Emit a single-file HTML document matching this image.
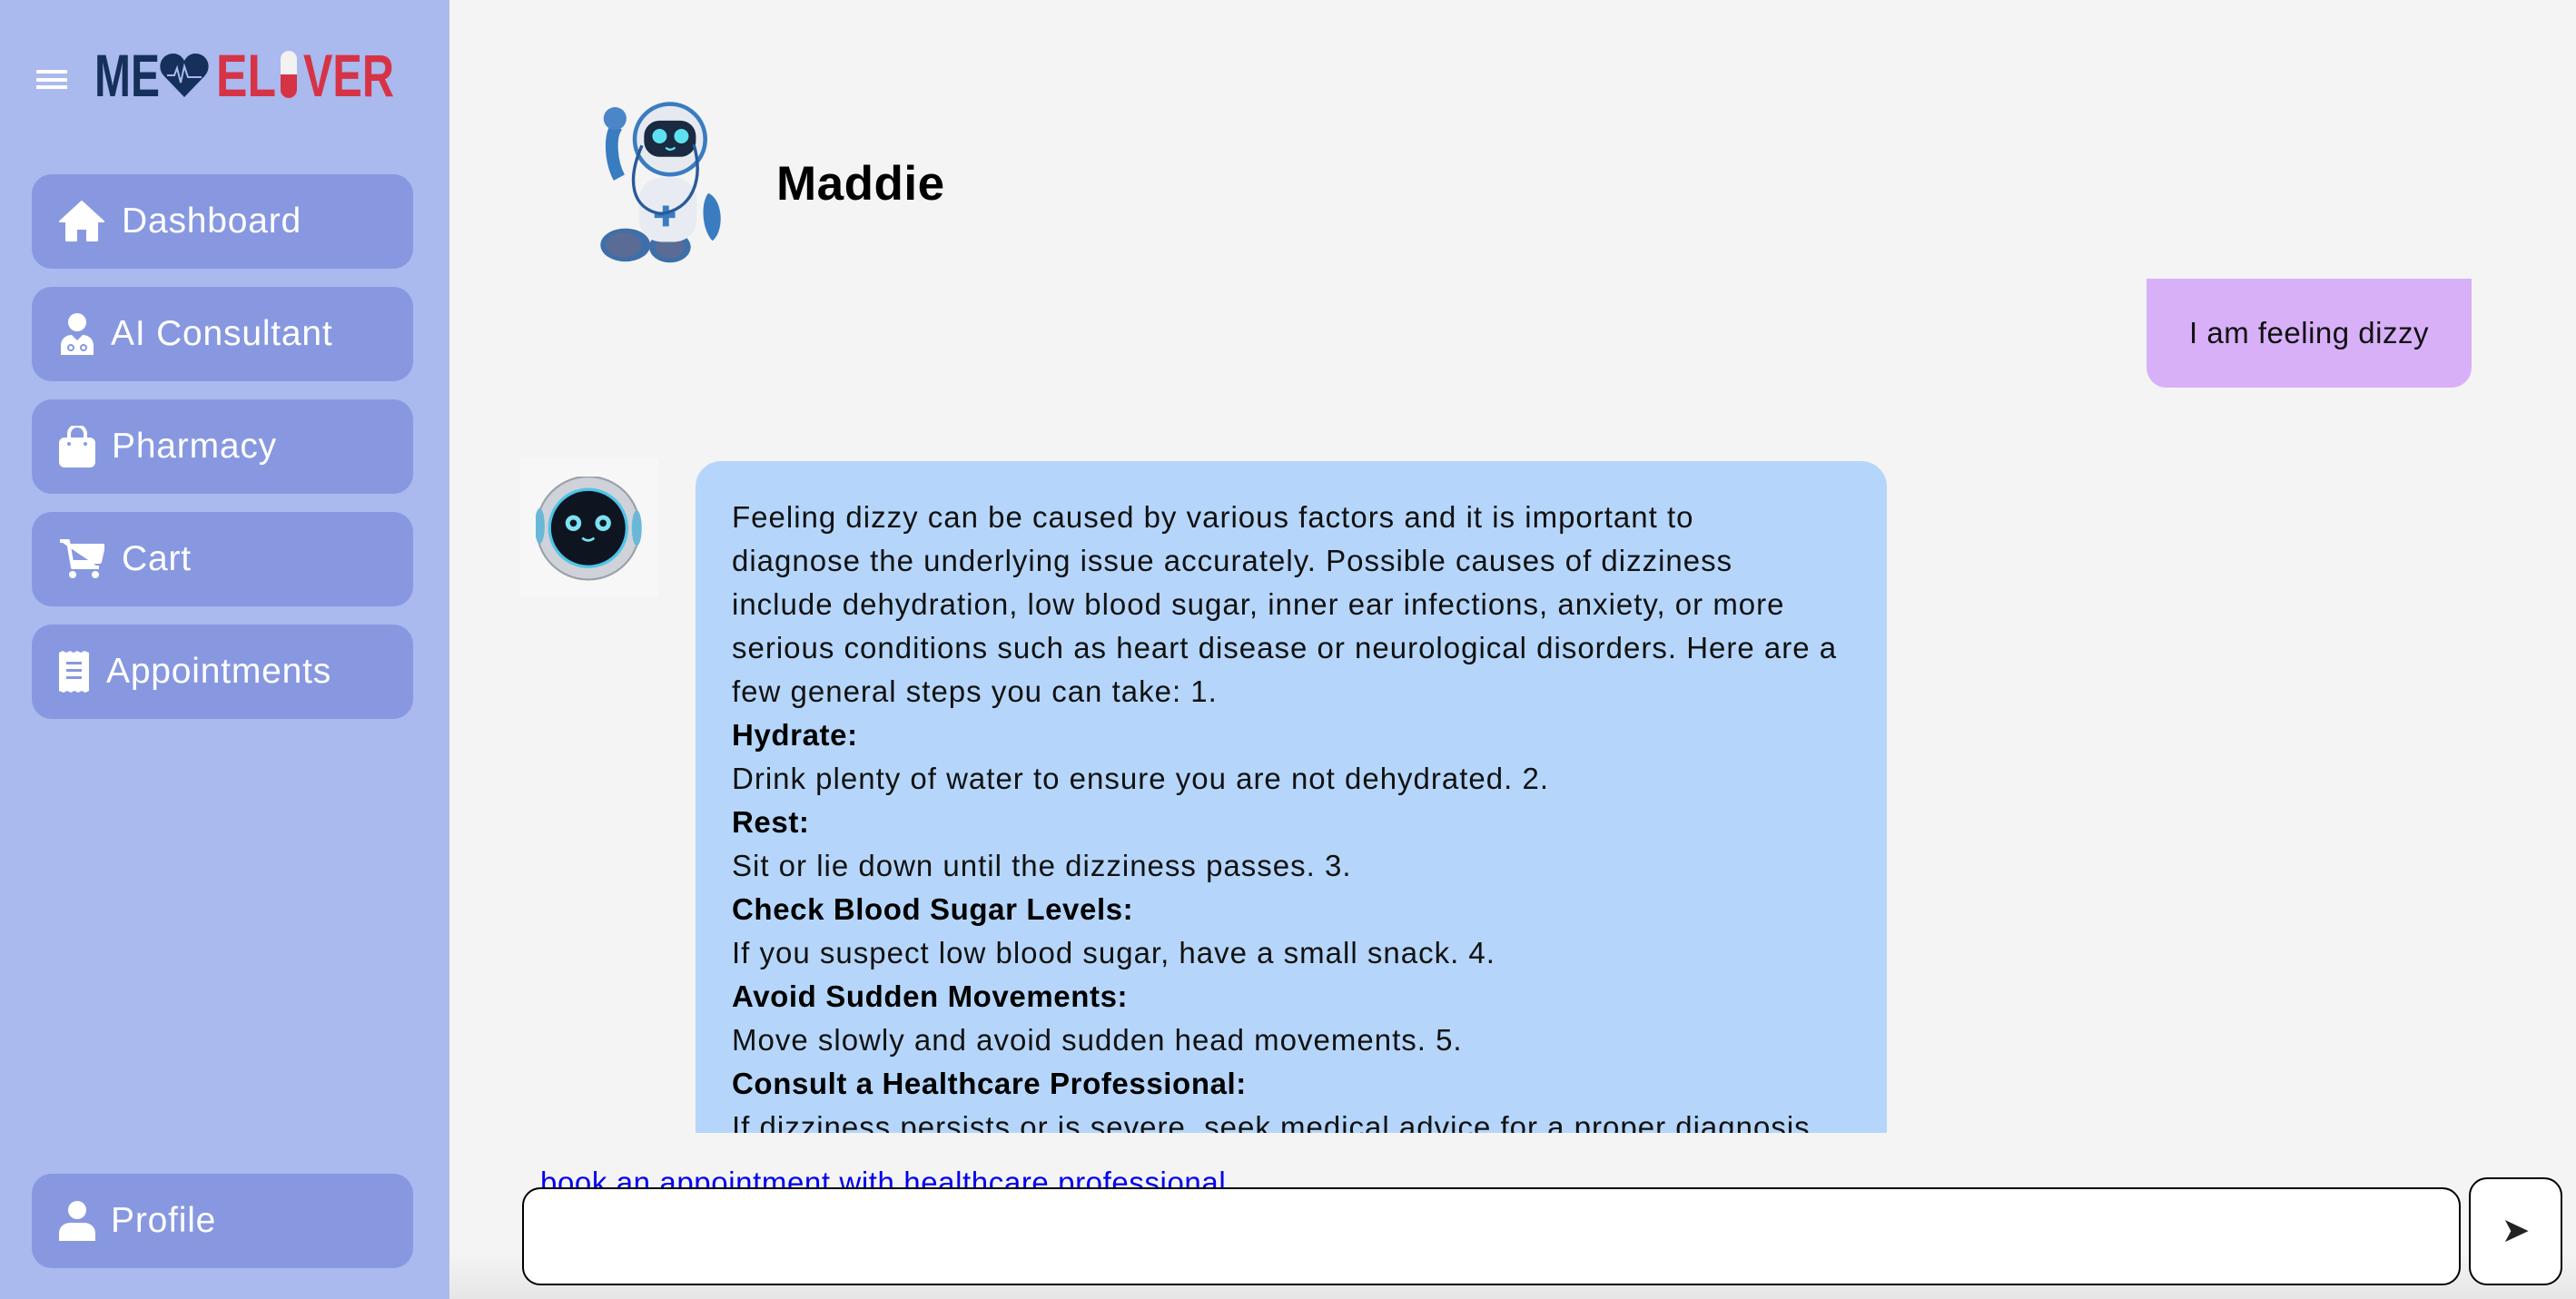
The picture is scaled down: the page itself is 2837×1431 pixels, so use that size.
<!DOCTYPE html>
<html><head><meta charset="utf-8"><style>
*{margin:0;padding:0;box-sizing:border-box}
body{width:2837px;height:1431px;overflow:hidden;background:#f4f4f4;font-family:"Liberation Sans",sans-serif;position:relative}
.side{position:absolute;left:0;top:0;width:495px;height:1431px;background:#aab9ee;z-index:5}
.btn{position:absolute;left:35px;width:420px;height:104px;background:#8898e0;border-radius:22px;color:#fff;font-size:39px;letter-spacing:0.8px}
.btn svg{position:absolute;top:50%;transform:translateY(-50%)}
.btn span{position:absolute;top:50%;transform:translateY(-50%)}
.bubble{position:absolute;left:766px;top:508px;width:1312px;height:740px;background:#b5d6fa;border-radius:28px 28px 0 0;overflow:hidden;padding:38px 20px 0 40px;font-size:33px;letter-spacing:1px;line-height:48px;color:#111;white-space:nowrap}
.bubble b{color:#000;letter-spacing:0.6px}
</style></head><body>
<div class="side">
  <div style="position:absolute;left:40px;top:77px;width:34px;height:21px;border-top:4px solid #fff;border-bottom:4px solid #fff"></div>
  <div style="position:absolute;left:40px;top:86px;width:34px;height:4px;background:#fff"></div>
  <svg style="position:absolute;left:104px;top:55px" width="332" height="55" viewBox="0 0 332 55">
    <text x="0" y="51" font-family="Liberation Sans" font-weight="bold" font-size="66" fill="#15305a" textLength="72" lengthAdjust="spacingAndGlyphs">ME</text>
    <path d="M99 52 L76 28 C68 18 74 4 87 4 C93 4 97 8 99 12 C101 8 105 4 111 4 C124 4 130 18 122 28 Z" fill="#15305a"/>
    <path d="M80 28 H88 L91 20 L95 36 L99 18 L103 30 H118" stroke="#aab9ee" stroke-width="2" fill="none"/>
    <text x="134" y="51" font-family="Liberation Sans" font-weight="bold" font-size="66" fill="#d63347" textLength="66" lengthAdjust="spacingAndGlyphs">EL</text>
    <rect x="205" y="1" width="18" height="52" rx="9" fill="#f2f2f2"/>
    <path d="M205 27 H223 V44 A9 9 0 0 1 205 44 Z" fill="#d63347"/>
    <text x="230" y="51" font-family="Liberation Sans" font-weight="bold" font-size="66" fill="#d63347" textLength="100" lengthAdjust="spacingAndGlyphs">VER</text>
  </svg>
  <div class="btn" style="top:192px"><svg style="left:30px" width="50" height="46" viewBox="0 0 50 46"><path d="M25 1 L49 23 H42 V44 H31 V31 H19 V44 H8 V23 H1 Z" fill="#fff" stroke="#fff" stroke-linejoin="round" stroke-width="2"/></svg><span style="left:99px">Dashboard</span></div>
  <div class="btn" style="top:316px"><svg style="left:30px" width="40" height="46" viewBox="0 0 40 46"><circle cx="20" cy="10" r="10" fill="#fff"/><path d="M2 46 V36 C2 28 8 24 14 24 L20 30 L26 24 C32 24 38 28 38 36 V46 Z" fill="#fff"/><circle cx="13" cy="38" r="3" fill="none" stroke="#8898e0" stroke-width="2"/><circle cx="27" cy="38" r="3" fill="none" stroke="#8898e0" stroke-width="2"/></svg><span style="left:87px">AI Consultant</span></div>
  <div class="btn" style="top:440px"><svg style="left:30px" width="40" height="46" viewBox="0 0 40 46"><path d="M11 14 V9 A9 9 0 0 1 29 9 V14" stroke="#fff" stroke-width="4" fill="none"/><rect x="0" y="13" width="40" height="33" rx="6" fill="#fff"/><circle cx="11" cy="20" r="2" fill="#8898e0"/><circle cx="29" cy="20" r="2" fill="#8898e0"/></svg><span style="left:88px">Pharmacy</span></div>
  <div class="btn" style="top:564px"><svg style="left:30px" width="50" height="46" viewBox="0 0 50 46"><path d="M1 3 H10 L15 32 H44 M11 8 H49 L45 26 H14" stroke="#fff" stroke-width="4" fill="#fff" stroke-linejoin="round"/><circle cx="15" cy="40" r="4" fill="#fff"/><circle cx="40" cy="40" r="4" fill="#fff"/></svg><span style="left:99px">Cart</span></div>
  <div class="btn" style="top:688px"><svg style="left:30px" width="34" height="46" viewBox="0 0 34 46"><path d="M0 2 L4 0 L8 2 L12 0 L16 2 L20 0 L24 2 L28 0 L33 2 V44 L29 46 L25 44 L21 46 L17 44 L13 46 L9 44 L5 46 L0 44 Z" fill="#fff"/><rect x="8" y="12" width="17" height="3" fill="#8898e0"/><rect x="8" y="20" width="17" height="3" fill="#8898e0"/><rect x="8" y="28" width="17" height="3" fill="#8898e0"/></svg><span style="left:82px">Appointments</span></div>
  <div class="btn" style="top:1293px"><svg style="left:30px" width="40" height="44" viewBox="0 0 40 44"><circle cx="20" cy="10" r="10" fill="#fff"/><path d="M0 44 V36 C0 28 6 24 13 24 H27 C34 24 40 28 40 36 V44 Z" fill="#fff"/></svg><span style="left:87px">Profile</span></div>
</div>

<svg style="position:absolute;left:650px;top:110px" width="170" height="185" viewBox="0 0 145 162">
  <ellipse cx="32" cy="140" rx="24" ry="16" fill="#3e6fa8"/><ellipse cx="30" cy="140" rx="17" ry="12" fill="#5a6c96"/>
  <ellipse cx="75" cy="142" rx="20" ry="15" fill="#3e6fa8"/><ellipse cx="75" cy="142" rx="14" ry="11" fill="#5a6c96"/>
  <rect x="45" y="75" width="56" height="62" rx="22" fill="#e8ecf2"/>
  <path d="M60 108 h8 v-6 h6 v6 h6 v6 h-6 v8 h-6 v-8 h-8z" fill="#3a7cc0"/>
  <path d="M26 75 C18 60 16 35 24 25" stroke="#3a7cc0" stroke-width="12" fill="none"/>
  <circle cx="22" cy="18" r="11" fill="#4a86c8"/>
  <path d="M112 90 C126 96 128 126 116 136 C106 126 104 100 112 90Z" fill="#3a7cc0"/>
  <circle cx="75" cy="38" r="34" fill="#e6eaf0"/><circle cx="75" cy="38" r="34" fill="none" stroke="#3a7cc0" stroke-width="4"/>
  <rect x="50" y="20" width="50" height="35" rx="15" fill="#1a2a40"/>
  <circle cx="65" cy="35" r="7" fill="#5ee0f0"/><circle cx="86" cy="35" r="7" fill="#5ee0f0"/>
  <path d="M71 46 Q75 50 80 46" stroke="#5ee0f0" stroke-width="2" fill="none"/>
  <path d="M48 44 C33 78 38 105 66 110 C96 106 108 78 98 43" stroke="#2a5a9a" stroke-width="3" fill="none"/>
</svg>
<div style="position:absolute;left:855px;top:172px;font-size:53px;font-weight:bold;color:#000;letter-spacing:0.5px">Maddie</div>

<div style="position:absolute;left:2364px;top:307px;width:358px;height:120px;background:#d8b0f8;border-radius:0 0 22px 22px;font-size:33px;letter-spacing:0.5px;line-height:120px;text-align:center;color:#111">I am feeling dizzy</div>

<div style="position:absolute;left:573px;top:505px;width:152px;height:152px;background:#f7f7f7"></div>
<svg style="position:absolute;left:590px;top:525px" width="120" height="120" viewBox="0 0 110 110">
  <circle cx="53" cy="52" r="52" fill="#cfd2d8"/><circle cx="53" cy="52" r="52" fill="none" stroke="#9aa0aa" stroke-width="2"/>
  <ellipse cx="4" cy="50" rx="5" ry="18" fill="#6ab8d8"/><ellipse cx="102" cy="52" rx="5" ry="18" fill="#6ab8d8"/>
  <circle cx="53" cy="52" r="39" fill="#0e1520" stroke="#4fc4e8" stroke-width="3"/>
  <circle cx="38" cy="47" r="8" fill="#7ee0f0"/><circle cx="68" cy="47" r="8" fill="#7ee0f0"/>
  <circle cx="38" cy="47" r="3.5" fill="#0e1520"/><circle cx="68" cy="47" r="3.5" fill="#0e1520"/>
  <path d="M47 62 Q53 67 59 62" stroke="#7ee0f0" stroke-width="2.5" fill="none"/>
</svg>

<div class="bubble">Feeling dizzy can be caused by various factors and it is important to<br>diagnose the underlying issue accurately. Possible causes of dizziness<br>include dehydration, low blood sugar, inner ear infections, anxiety, or more<br>serious conditions such as heart disease or neurological disorders. Here are a<br>few general steps you can take: 1.<br><b>Hydrate:</b><br>Drink plenty of water to ensure you are not dehydrated. 2.<br><b>Rest:</b><br>Sit or lie down until the dizziness passes. 3.<br><b>Check Blood Sugar Levels:</b><br>If you suspect low blood sugar, have a small snack. 4.<br><b>Avoid Sudden Movements:</b><br>Move slowly and avoid sudden head movements. 5.<br><b>Consult a Healthcare Professional:</b><br>If dizziness persists or is severe, seek medical advice for a proper diagnosis.</div>

<div style="position:absolute;left:595px;top:1284px;font-size:33px;letter-spacing:0.6px;color:#0000ee;text-decoration:underline;white-space:nowrap">book an appointment with healthcare professional</div>
<div style="position:absolute;left:495px;top:1380px;width:2342px;height:51px;background:linear-gradient(#f4f4f4,#e6e6e6)"></div>
<div style="position:absolute;left:575px;top:1308px;width:2135px;height:108px;background:#fff;border:2px solid #000;border-radius:20px"></div>
<div style="position:absolute;left:2719px;top:1297px;width:103px;height:119px;background:#fff;border:2px solid #000;border-radius:20px;font-size:38px;line-height:115px;text-align:center;color:#222">➤</div>
</body></html>
